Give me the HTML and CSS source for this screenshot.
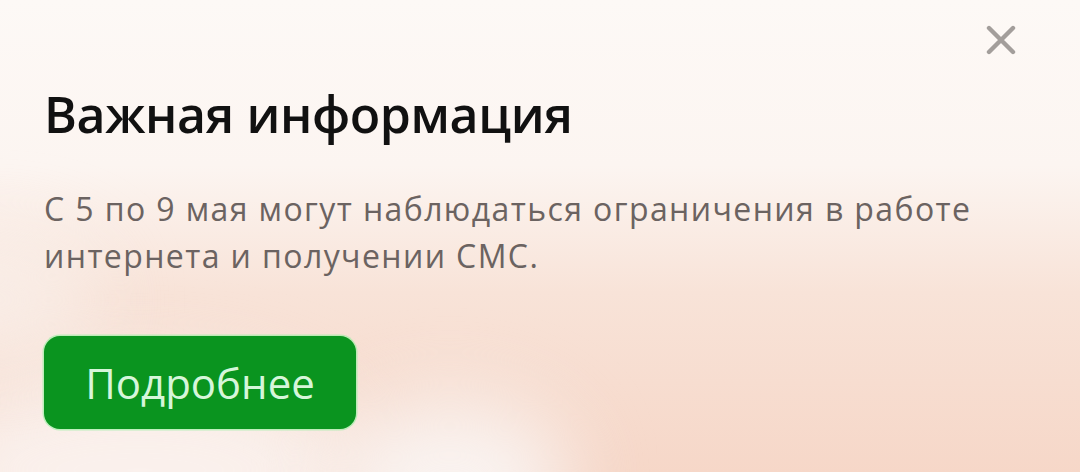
FILE: index.html
```html
<!DOCTYPE html>
<html lang="ru">
<head>
<meta charset="utf-8">
<link rel="stylesheet" href="styles.css">
</head>
<body>
<div class="banner">
  <div class="blob blob-a"></div>
  <div class="blob blob-b"></div>
  <div class="blob blob-c"></div>
  <button class="close" aria-label="Закрыть">
    <svg width="30" height="30" viewBox="0 0 30 30"><path d="M3 3 L27 27 M27 3 L3 27" stroke="#a39e9b" stroke-width="4.4" stroke-linecap="round" fill="none"/></svg>
  </button>
  <div class="content">
    <h1 class="title">Важная информация</h1>
    <p class="text">С 5 по 9 мая могут наблюдаться ограничения в работе интернета и получении СМС.</p>
    <a class="btn" href="#">Подробнее</a>
  </div>
</div>
</body>
</html>
```
FILE: styles.css
```css
html, body {
  margin: 0;
  padding: 0;
}
body {
  width: 1080px;
  height: 472px;
  overflow: hidden;
  font-family: "Open Sans", "Noto Sans", sans-serif;
}
.banner {
  position: relative;
  width: 1080px;
  height: 472px;
  overflow: hidden;
  background: linear-gradient(180deg, #fdf9f6 0%, #fcf5f1 35%, #f8e3d8 62%, #f6d7c8 100%);
}
.blob {
  position: absolute;
  border-radius: 50%;
  filter: blur(40px);
}
.blob-a {
  left: -80px;
  top: 370px;
  width: 440px;
  height: 200px;
  background: rgba(250, 244, 242, 0.85);
}
.blob-b {
  left: 330px;
  top: 400px;
  width: 240px;
  height: 160px;
  background: rgba(250, 246, 245, 0.9);
}
.blob-c {
  left: -120px;
  top: 240px;
  width: 220px;
  height: 120px;
  background: rgba(250, 242, 238, 0.7);
}
.close {
  position: absolute;
  top: 25px;
  right: 64px;
  width: 30px;
  height: 30px;
  padding: 0;
  border: 0;
  background: none;
  cursor: pointer;
  display: flex;
}
.content {
  position: relative;
  display: flex;
  flex-direction: column;
  align-items: flex-start;
  padding: 79px 0 0 44px;
}
.title {
  margin: 0;
  font-size: 50px;
  font-weight: 600;
  line-height: 70px;
  color: #111;
  letter-spacing: -0.4px;
}
.text {
  margin: 36px 0 0;
  width: 1000px;
  font-size: 32px;
  line-height: 47px;
  letter-spacing: 1.4px;
  color: #6b6361;
}
.btn {
  margin-top: 57px;
  width: 312px;
  height: 93px;
  box-sizing: border-box;
  display: flex;
  align-items: center;
  justify-content: center;
  background: #0a941f;
  border-radius: 16px;
  box-shadow: 0 0 0 1.5px rgba(150, 240, 160, 0.6);
  color: #d6f6da;
  font-size: 42px;
  text-decoration: none;
}
```
